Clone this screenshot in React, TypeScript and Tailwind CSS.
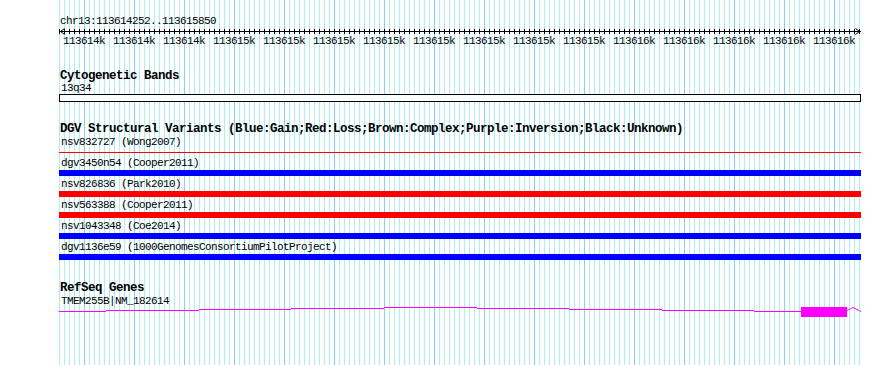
const mono = "font-['Liberation_Mono','DejaVu_Sans_Mono',monospace]"

const minor = Array.from({ length: 161 }, (_, i) => 59 + i * 5)
const ticks = Array.from({ length: 16 }, (_, i) => (i < 3 ? '113614k' : i < 11 ? '113615k' : '113616k'))

const variants = [
  { name: 'nsv832727 (Wong2007)', color: 'red', thin: true },
  { name: 'dgv3450n54 (Cooper2011)', color: 'blue' },
  { name: 'nsv826836 (Park2010)', color: 'red' },
  { name: 'nsv563388 (Cooper2011)', color: 'red' },
  { name: 'nsv1043348 (Coe2014)', color: 'blue' },
  { name: 'dgv1136e59 (1000GenomesConsortiumPilotProject)', color: 'blue' },
]

// intron hat, absolute x ranges and y
const intron: [number, number, number][] = [
  [59, 106, 309],
  [106, 199, 308],
  [199, 291, 307],
  [291, 384, 306],
  [384, 477, 305],
  [477, 569, 306],
  [569, 662, 307],
  [662, 754, 308],
  [754, 801, 309],
]

function Grid() {
  return (
    <svg className="absolute inset-0" width={890} height={365} shapeRendering="crispEdges">
      {minor.map(x => (
        <rect key={x} x={x} y={0} width={1} height={365} fill={(x - 84) % 50 === 0 ? '#87cefa' : '#afeeee'} />
      ))}
    </svg>
  )
}

function Ruler() {
  return (
    <div className="flex flex-col">
      <div className="h-[13px] leading-[13px] pl-px">chr13:113614252..113615850</div>
      <svg width={802} height={9} shapeRendering="crispEdges" className="block mt-[-2px]">
        <rect x={1} y={5} width={801} height={1} fill="black" />
        {minor.map(x => (
          <rect key={x} x={x - 59} y={3} width={1} height={5} fill="black" />
        ))}
        <path d="M1.5 5.5 L5.5 2.5 M1.5 5.5 L5.5 8.5 M800.5 5.5 L796.5 2.5 M800.5 5.5 L796.5 8.5" stroke="black" strokeWidth={1} fill="none" shapeRendering="auto" />
      </svg>
      <div className="flex h-[13px] leading-[13px]">
        {ticks.map((t, i) => (
          <div key={i} className="w-[50px] shrink-0 text-center">{t}</div>
        ))}
      </div>
    </div>
  )
}

function Title({ children, className = '' }: { children: string; className?: string }) {
  return (
    <div className={`h-[13px] leading-[13px] text-[12.5px] tracking-[-0.5px] font-bold pl-px ${className}`}>
      {children}
    </div>
  )
}

function Label({ children, className = '' }: { children: string; className?: string }) {
  return <div className={`h-[13px] leading-[13px] pl-[2px] ${className}`}>{children}</div>
}

function Gene() {
  return (
    <svg width={802} height={14} shapeRendering="crispEdges" className="block mt-[-2px]">
      {intron.map(([a, b, y]) => (
        <rect key={a} x={a - 59} y={y - 304} width={b - a} height={1} fill="#ff00ff" />
      ))}
      <rect x={801 - 59} y={1} width={46} height={10} fill="#ff00ff" />
      <polyline
        points={`${847 - 59},4.5 ${853 - 59},1.5 ${861 - 59},5.5`}
        stroke="#ff00ff"
        strokeWidth={1}
        fill="none"
        shapeRendering="auto"
      />
    </svg>
  )
}

export default function App() {
  return (
    <div className={`relative w-[890px] h-[365px] overflow-hidden bg-white text-black text-[11px] tracking-[-0.6px] ${mono}`}>
      <Grid />
      <div className="relative flex flex-col pl-[59px] w-[861px] pt-[15px]">
        <Ruler />

        <Title className="mt-[22px]">Cytogenetic Bands</Title>
        <Label className="mt-[-1px]">13q34</Label>
        <div className="mt-[-1px] h-[8px] border border-black bg-white" />

        <Title className="mt-[21px]">DGV Structural Variants (Blue:Gain;Red:Loss;Brown:Complex;Purple:Inversion;Black:Unknown)</Title>
        <div className="flex flex-col">
          {variants.map(v => (
            <div key={v.name} className="flex flex-col h-[21px]">
              <Label>{v.name}</Label>
              {v.thin ? (
                <div className="h-[6px] flex items-center">
                  <div className="h-px w-full bg-[#ff0000]" />
                </div>
              ) : (
                <div className={`h-[6px] w-full ${v.color === 'red' ? 'bg-[#ff0000]' : 'bg-[#0000ff]'}`} />
              )}
            </div>
          ))}
        </div>

        <Title className="mt-[20px]">RefSeq Genes</Title>
        <Label>TMEM255B|NM_182614</Label>
        <Gene />
      </div>
    </div>
  )
}
